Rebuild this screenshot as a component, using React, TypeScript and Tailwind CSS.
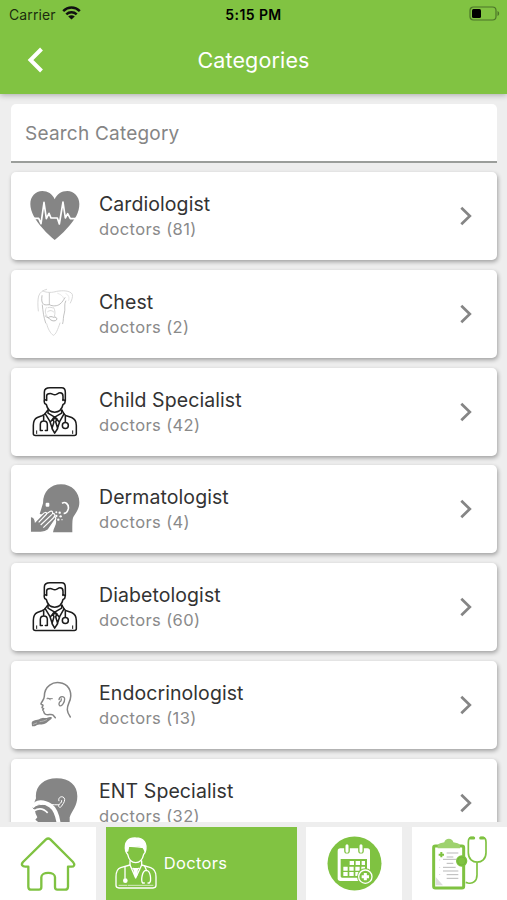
import React from 'react';

interface Category {
  name: string;
  count: number;
  icon: React.FC;
}

const iconClass = 'w-[52px] h-[52px] shrink-0';

const HeartIcon: React.FC = () => (
  <svg viewBox="87 300 156 156" className={iconClass}>
    <path
      d="M164 328C157 311 143 303 127 303C106 303 91 320 91 342C91 353 95 367 101 378C115 404 141 431 164 450C188 431 214 404 229 378C235 367 238 353 238 342C238 320 222 303 202 303C184 303 170 313 164 328Z"
      fill="#858585"
    />
    <path
      d="M96 385H116L123 401L132 337L139 386L147 370L153 384H172L178 402L189 336L196 384L203 371L211 386H234"
      fill="none"
      stroke="#fff"
      strokeWidth="5"
      strokeLinejoin="round"
    />
  </svg>
);

const ChestIcon: React.FC = () => (
  <svg viewBox="27 53 156 156" className={iconClass} fill="none" stroke="#cfcfcf" strokeWidth="2.4" strokeLinecap="round">
    <path d="M55 122C53 105 53 88 56 77C60 65 69 60 80 57M69 62C80 68 97 67 110 63C128 60 150 60 157 72C159 80 155 90 151 98" />
    <path d="M66 76C64 88 65 98 71 102C76 105 82 103 88 103M90 104C97 108 112 108 120 101C127 96 131 88 135 82" stroke="#b0b0b0" />
    <path d="M88 68V103" stroke="#bbb" />
    <path d="M67 104C69 124 71 140 77 158M137 92C131 102 137 118 133 128C129 140 131 150 128 160" stroke="#b5b5b5" />
    <path d="M79 112C74 121 75 131 82 138M101 112C106 120 106 130 103 138M84 112C90 110 96 111 99 113M83 124C90 119 96 120 101 125" />
    <path d="M76 137C81 143 87 141 91 148C98 153 106 153 110 148C112 141 106 139 100 141C96 138 90 138 86 141" stroke="#a8a8a8" />
    <path d="M80 160C83 175 92 190 100 195C108 192 113 178 120 158" />
    <path d="M138 70C146 74 149 82 146 90M113 69C121 72 129 76 131 84" stroke="#e2e2e2" />
  </svg>
);

const DoctorIcon: React.FC = () => (
  <svg viewBox="27 46.5 156 156" className={iconClass} fill="none" stroke="#1c1c1c" strokeWidth="4.6" strokeLinecap="round" strokeLinejoin="round">
    <path d="M73 91V65C73 56 80 52 90 52H125C132 52 136 58 136 66V91" />
    <path d="M80 90V76C80 70 85 69 91 69C96 69 99 73 104 73C110 73 114 67 120 67C126 67 129 71 129 77V90" />
    <path d="M79 88C71 87 70 99 79 102C82 116 92 125 104 125C116 125 126 116 129 102C138 99 137 87 129 88" />
    <path d="M83 119C78 125 76 132 66 136L52 141C43 145 40 153 40 165V190C40 193 42 195 46 195H163C167 195 169 193 169 190V165C169 152 164 145 155 141L139 136C132 133 130 127 126 119" />
    <path d="M84 119V128L104 140L125 128V119M76 130L91 155L102 140M132 130L118 155L106 140M98 145L111 145L107 154L113 174L104 188L96 174L102 154ZM90 154L98 178M119 154L111 178" />
    <path d="M71 136V150M61 180V162C61 148 82 148 82 162V180H76M61 180H67M136 136V155" />
    <circle cx="136" cy="165" r="9" />
    <path d="M50 181V189M158 181V189" strokeWidth="3" />
  </svg>
);

const SkinIcon: React.FC = () => (
  <svg viewBox="27 40 156 156" className={iconClass}>
    <path d="M69 101C69 66 92 44 123 44C156 44 178 68 178 98C178 117 169 128 160 142C157 149 157 158 157 188H99C101 173 111 164 108 153L103 142L59 133Z" fill="#858585" />
    <rect x="77" y="99" width="11" height="12" rx="3" fill="#fff" />
    <path d="M126 101C136 94 147 104 145 117C143 125 138 132 131 131" fill="none" stroke="#fff" strokeWidth="5" />
    <path
      d="M31 188V141C39 140 45 146 46 156L69 133C73 127 80 127 80 132L91 125C97 122 100 129 97 133C103 130 107 135 103 141C110 142 108 149 103 154L84 181C78 187 72 188 62 188Z"
      fill="#858585"
      stroke="#fff"
      strokeWidth="3.5"
    />
    <path d="M56 158L80 133M62 166L96 134M70 174L103 142" stroke="#fff" strokeWidth="3.5" />
    <path d="M29.500 142V190H99" fill="none" stroke="#fff" strokeWidth="3" />
    <g fill="#fff">
      <circle cx="109" cy="128" r="3" />
      <circle cx="119" cy="129" r="3.5" />
      <circle cx="109" cy="139" r="3.5" />
      <circle cx="122" cy="140" r="3.5" />
      <circle cx="115" cy="150" r="3.5" />
      <circle cx="126" cy="150" r="2" />
    </g>
  </svg>
);

const GlandIcon: React.FC = () => (
  <svg viewBox="27 41 156 156" className={iconClass} fill="none" stroke="#858585" strokeWidth="4.5" strokeLinecap="round" strokeLinejoin="round">
    <path d="M151 155C139 139 140 128 147 112C160 85 148 61 127 54C98 45 73 64 73 93C73 101 66 108 63 115C63 119 69 118 69 120L66 127L71 130L68 134C74 138 69 144 77 147C85 150 94 145 99 149L106 157" />
    <path d="M117 103C119 91 134 91 134 101C134 111 126 124 119 121C115 117 117 110 123 107L124 101" strokeWidth="4" />
    <path d="M81 100H97M84 98L91 103" strokeWidth="3" />
    <path d="M35 172C38 163 50 166 59 161C65 156 76 159 82 157C89 154 100 154 94 161C88 165 84 169 79 173C71 179 59 176 51 179C47 184 41 182 36 183Z" fill="#858585" stroke="none" />
    <path d="M60 169C68 168 75 166 80 163M40 177L50 173" stroke="#ccc" strokeWidth="2" />
  </svg>
);

const EntIcon: React.FC = () => (
  <svg viewBox="87 79.5 156 156" className={iconClass}>
    <path d="M108 143C104 108 130 83 170 83C209 83 232 104 232 137C232 166 216 180 209 200V236H113L115 215L106 208L112 200L107 190L104 177L97 171Z" fill="#858585" />
    <path d="M97 170C109 151 131 151 151 165C168 177 175 199 178 236" fill="none" stroke="#fff" strokeWidth="12" />
    <path d="M102 181C117 171 132 175 143 187" fill="none" stroke="#fff" strokeWidth="5" />
    <path d="M98 171C113 157 138 163 178 163" fill="none" stroke="#fff" strokeWidth="3" />
    <path d="M99 175C113 163 130 165 143 174" fill="none" stroke="#858585" strokeWidth="2.5" />
    <path d="M177 152C172 137 193 134 194 147C194 156 187 162 184 168C180 173 174 169 176 164C177 159 187 158 185 149" fill="none" stroke="#fff" strokeWidth="3" />
  </svg>
);

const categories: Category[] = [
  { name: 'Cardiologist', count: 81, icon: HeartIcon },
  { name: 'Chest', count: 2, icon: ChestIcon },
  { name: 'Child Specialist', count: 42, icon: DoctorIcon },
  { name: 'Dermatologist', count: 4, icon: SkinIcon },
  { name: 'Diabetologist', count: 60, icon: DoctorIcon },
  { name: 'Endocrinologist', count: 13, icon: GlandIcon },
  { name: 'ENT Specialist', count: 32, icon: EntIcon },
];

const StatusBar: React.FC = () => (
  <div className="grid h-7 grid-cols-3 items-center pl-[7px] pr-[7px] text-black">
    <div className="flex items-center gap-[6px] pl-[2px]">
      <span className="text-[14px] tracking-[0.1px] text-black/80">Carrier</span>
      <svg viewBox="0 0 19 14" className="-mt-[2px] h-[14px] w-[19px]" fill="none" stroke="#111" strokeWidth="2.5">
        <path d="M1.2 5.1C6 .4 13 .4 17.8 5.1M4.3 8.4C7.2 5.6 11.8 5.6 14.7 8.4" />
        <path d="M9.5 13.5L6.2 10.4C8 8.8 11 8.8 12.8 10.4Z" fill="#111" stroke="none" />
      </svg>
    </div>
    <span className="text-center text-[14px] font-semibold tracking-[0.4px] whitespace-nowrap">5:15 PM</span>
    <svg viewBox="0 0 31 15" className="-mt-[2px] h-[15px] w-[31px] justify-self-end">
      <rect x="1" y="1" width="26" height="13" rx="3.5" fill="none" stroke="#4c7529" strokeWidth="1.2" />
      <rect x="3" y="3" width="9" height="9" rx="1.5" fill="#000" />
      <path d="M28.5 5C30.7 6 30.7 9 28.5 10Z" fill="#4c7529" />
    </svg>
  </div>
);

const CategoryCard: React.FC<{ category: Category }> = ({ category }) => {
  const Icon = category.icon;

  return (
    <div className="flex h-[88px] shrink-0 items-center rounded-[5px] bg-white pl-[18px] pr-[24px] shadow-[1px_2px_4px_rgba(0,0,0,0.33)]">
      <Icon />
      <div className="ml-[18px] flex-1">
        <div className="text-[19.5px] leading-[26px] tracking-[0.08px] text-[#333]">{category.name}</div>
        <div className="text-[16.5px] leading-[24px] tracking-[0.38px] text-[#8a8a8a]">doctors ({category.count})</div>
      </div>
      <svg viewBox="0 0 14 20" className="h-5 w-[14px]" fill="none" stroke="#858585" strokeWidth="2.7">
        <path d="M2.3 1.7L10.8 10L2.3 18.3" />
      </svg>
    </div>
  );
};

const HomeTabIcon: React.FC = () => (
  <svg viewBox="59 252 174 174" className="h-[58px] w-[58px]" fill="none" stroke="#7fc241" strokeWidth="7" strokeLinejoin="round">
    <path d="M140 265L71 333C64 341 69 348 80 347L87 347V407C87 413 90 416 96 416H119C124 416 126 413 126 408V379C126 361 167 361 167 379V408C167 413 169 416 174 416H196C203 416 206 413 206 407V347L214 347C225 348 228 341 221 333L153 265C148 261 145 261 140 265Z" />
  </svg>
);

const DoctorTabIcon: React.FC = () => (
  <svg viewBox="340 258 138 165" className="h-[55px] w-[46px]" fill="none" stroke="#fff" strokeWidth="4" strokeLinecap="round" strokeLinejoin="round">
    <path d="M378 303C373 276 386 263 408 264C432 264 444 279 437 305L431 293C419 288 397 291 387 288L384 303Z" fill="#fff" />
    <path d="M384 295C376 295 378 309 384 313C387 327 396 338 408 338C420 338 429 327 432 313C438 309 440 295 432 295" />
    <path d="M391 333V345L363 353C352 357 349 366 349 380V406C349 412 352 414 358 414H460C466 414 469 411 469 406V380C469 366 464 357 453 353L426 345V333" />
    <path d="M391 345L408 384L426 345M400 355L408 362L417 355M376 351V385M435 348L441 362M434 399H429C423 392 427 361 440 361C453 361 456 392 449 399H445" />
    <path d="M401 354H415L413 376L408 383L403 376Z" fill="#fff" stroke="none" />
    <circle cx="377" cy="392" r="7" fill="#fff" stroke="none" />
    <path d="M358 406H382M386 406H460" strokeWidth="2" />
  </svg>
);

const CalendarTabIcon: React.FC = () => (
  <svg viewBox="381 257 165 165" className="h-[55px] w-[55px]">
    <circle cx="463.500" cy="339.500" r="81" fill="#7fc241" />
    <rect x="413" y="294" width="97" height="98" rx="8" fill="#fff" />
    <path d="M422 326H501V382H427C423 382 422 380 422 377Z" fill="#7fc241" />
    <path d="M441 287V301M483 287V301" stroke="#7fc241" strokeWidth="17" strokeLinecap="round" />
    <path d="M441 286V303M483 286V303" stroke="#fff" strokeWidth="9" strokeLinecap="round" />
    <path d="M449 338H495M430 355H495M430 371H480" stroke="#fff" strokeWidth="12" strokeDasharray="13 5" />
    <circle cx="496" cy="379" r="25" fill="#7fc241" />
    <circle cx="496" cy="379" r="20" fill="none" stroke="#fff" strokeWidth="4" />
    <path d="M496 368V390M485 379H507" stroke="#fff" strokeWidth="9" />
  </svg>
);

const RecordsTabIcon: React.FC = () => (
  <svg viewBox="690 256 174 171" className="h-[57px] w-[58px]" fill="none" stroke="#7fc241">
    <rect x="701" y="289" width="90" height="126" rx="5" fill="#fff" strokeWidth="9" />
    <path d="M707 382L729 407H707Z" fill="#ddd" stroke="none" />
    <path d="M713 296V289C713 281 726 280 733 278C735 264 758 264 760 278C768 280 780 281 780 289V296Z" fill="#9ed26e" stroke="none" />
    <path d="M724 307V323M716 315H732" strokeWidth="6" />
    <path d="M740 310H775M740 322H760M729 329H769M740 341H760M729 353H767M729 364H775M740 375H775M740 386H775" stroke="#aaa" strokeWidth="2.5" />
    <path d="M719 330V332M719 352V354M719 374V376" stroke="#aaa" strokeWidth="2" />
    <path d="M822 264H813C807 264 805 269 805 278V309C805 347 858 347 858 309V278C858 269 855 264 849 264H841M831 339V375C831 395 819 403 804 400L797 398" strokeWidth="5" />
    <path d="M812 265H821M842 265H850" strokeWidth="9" strokeLinecap="round" />
    <circle cx="785" cy="334" r="17" fill="#7fc241" stroke="none" />
    <circle cx="785" cy="334" r="12" strokeWidth="2" stroke="#6eb238" />
  </svg>
);

export default function App() {
  return (
    <div className="flex h-[900px] w-[507px] flex-col overflow-hidden bg-[#eee] font-['Inter','Liberation_Sans',sans-serif]">
      <header className="relative z-10 h-[94px] shrink-0 bg-[#81c342] shadow-[0_1px_6px_rgba(0,0,0,0.3)]">
        <StatusBar />
        <div className="grid h-[64px] grid-cols-[60px_1fr_60px] items-center">
          <svg viewBox="0 0 17 26" className="ml-[27px] h-[26px] w-[17px]" fill="none" stroke="#fff" strokeWidth="4">
            <path d="M14.5 2L3.5 13L14.5 24" />
          </svg>
          <h1 className="text-center text-[21.5px] tracking-[0.15px] text-white">Categories</h1>
        </div>
      </header>

      <main className="flex min-h-0 flex-1 flex-col overflow-hidden pl-[11px] pr-[10px] pt-[10px]">
        <div className="flex h-[59px] shrink-0 items-center rounded-t-[5px] border-b-2 border-[#9b9e9b] bg-white pl-[14px] pt-[3px] text-[19px] tracking-[0.22px] text-[#858585]">
          Search Category
        </div>
        <div className="mt-[9px] flex flex-col gap-[9.75px]">
          {categories.map((category) => (
            <CategoryCard key={category.name} category={category} />
          ))}
        </div>
      </main>

      <nav className="relative z-10 grid h-[78px] shrink-0 grid-cols-[96px_191px_96px_95px] justify-between bg-[#eee] pt-[5px]">
        <div className="flex items-center justify-center bg-white">
          <HomeTabIcon />
        </div>
        <div className="flex items-center gap-[5px] bg-[#81c342] pl-[7px] text-[16.5px] tracking-[0.35px] text-white">
          <DoctorTabIcon />
          Doctors
        </div>
        <div className="flex items-center justify-center bg-white">
          <CalendarTabIcon />
        </div>
        <div className="flex items-center justify-center bg-white">
          <RecordsTabIcon />
        </div>
      </nav>
    </div>
  );
}
